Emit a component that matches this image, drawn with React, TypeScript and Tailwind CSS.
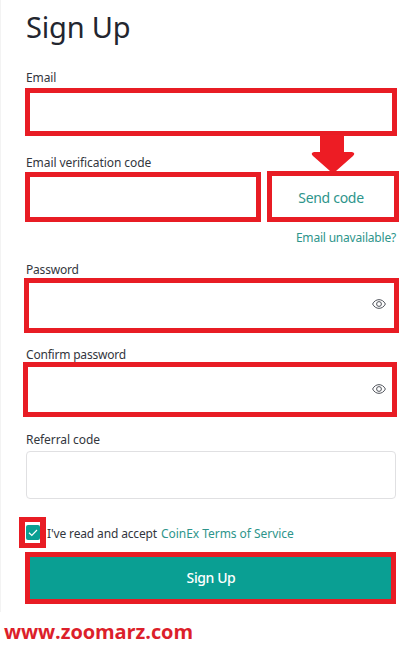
import React from "react";

function Label({ className, children }: { className: string; children: React.ReactNode }) {
  return <label className={`block h-4 pl-[26px] text-[12px] leading-4 whitespace-nowrap text-[#33363d] ${className}`}>{children}</label>;
}

function Eye() {
  return (
    <svg width="14" height="10" viewBox="0 0 14 10" fill="none" stroke="#50535b" strokeWidth="1">
      <path d="M.6 5C3.4-.8 10.6-.8 13.4 5C10.6 10.8 3.4 10.8.6 5Z" />
      <circle cx="7" cy="5" r="2.4" />
    </svg>
  );
}

export default function App() {
  return (
    <main className="relative h-[648px] w-[412px] overflow-hidden bg-white font-['Noto_Sans',sans-serif]">
      <form className="h-[612px] border-l border-[#f3f3f3]">
        <div className="-ml-px flex flex-col">
          <h1 className="h-[70px] pt-[7px] pl-[26px] text-[29px] leading-[40px] tracking-[-0.2px] text-[#23262f]">Sign Up</h1>
          <Label className="tracking-[-0.1px]">Email</Label>
          <div className="mt-[2px] ml-[25px] h-[48px] w-[372px] border-5 border-[#e81c24]" />
          <Label className="mt-[19px] tracking-[-0.08px]">Email verification code</Label>
          <div className="flex">
            <div className="mt-px ml-[25px] h-[50px] w-[236px] border-5 border-[#e81c24]" />
            <button type="button" className="ml-[6px] h-[51px] w-[132px] border-5 border-[#e81c24] pt-[3px] pr-[4px] text-[14px] leading-5 tracking-[-0.3px] whitespace-nowrap text-[#2e958b]">Send code</button>
          </div>
          <a className="mt-2 mr-[16px] block h-4 text-right text-[12px] leading-4 tracking-[-0.2px] text-[#2e958b]">Email unavailable?</a>
          <Label className="mt-[16px] tracking-[-0.2px]">Password</Label>
          <div className="ml-[24px] flex h-[55px] w-[375px] items-center justify-end border-5 border-[#e81c24] pr-[8px] pb-[3px]"><Eye /></div>
          <Label className="mt-[14px] tracking-[-0.2px]">Confirm password</Label>
          <div className="-mt-px ml-[23px] flex h-[55px] w-[374px] items-center justify-end border-5 border-[#e81c24] pr-[6px] pb-[1px]"><Eye /></div>
          <Label className="mt-[15px] tracking-[-0.08px]">Referral code</Label>
          <div className="mt-[3px] ml-[26px] h-[48px] w-[370px] rounded-[4px] border border-[#e0e0e2]" />
          <div className="mt-[18px] ml-[19px] flex h-[31px]">
            <div className="flex h-[31px] w-[27px] items-center justify-center border-[6px] border-y-5 border-[#e81c24]">
              <div className="flex h-[15px] w-[14px] items-center justify-center rounded-[2px] bg-[#0a9f93]">
                <svg width="10" height="8" viewBox="0 0 10 8" fill="none" stroke="white" strokeWidth="1.2"><path d="M1 3.8L3.8 6.4L9 1" /></svg>
              </div>
            </div>
            <p className="flex pt-[9px] text-[12px] leading-4 whitespace-nowrap text-[#33363d]">
              <span className="w-[115px] pl-px tracking-[-0.14px]">I've read and accept</span>
              <a className="tracking-[-0.04px] text-[#2e958b]">CoinEx Terms of Service</a>
            </p>
          </div>
          <button type="button" className="mt-1 ml-[25px] h-[52px] w-[371px] border-5 border-[#e81c24] bg-[#0a9f93] pl-px text-[14px] leading-5 font-medium tracking-[-0.4px] text-white">Sign Up</button>
        </div>
      </form>
      <div className="mt-[6px] pl-[4px] font-['Open_Sans',sans-serif] text-[20px] leading-7 font-bold tracking-[-0.08px] text-[#dc1f2b]">www.zoomarz.com</div>
      <svg className="absolute top-[135px] left-[311px]" width="44" height="37" viewBox="0 0 44 37" fill="#ed1c24">
        <path d="M9 0H33V17H41Q45 18 42 21L25 36H19L2 21Q-1 18 3 17H9Z" />
      </svg>
    </main>
  );
}
